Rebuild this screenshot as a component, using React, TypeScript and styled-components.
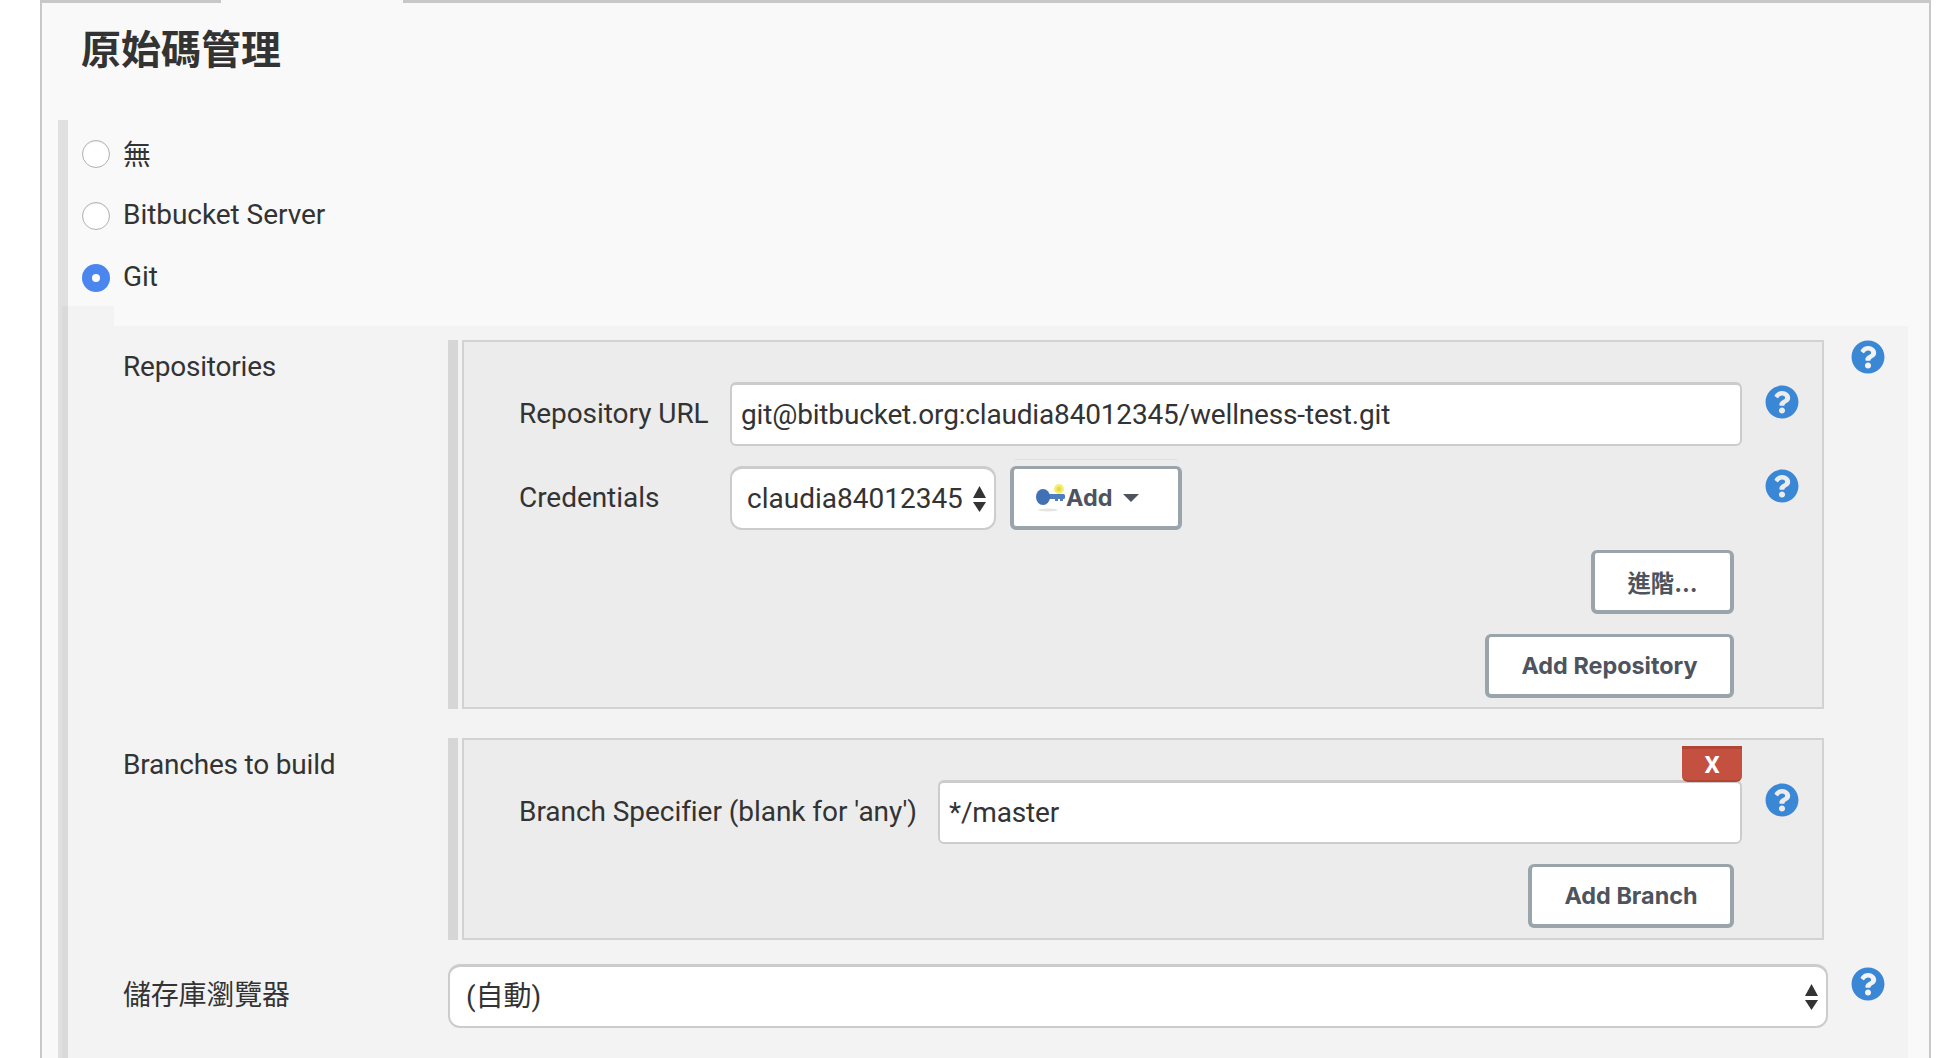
import React from "react";
import styled, { createGlobalStyle } from "styled-components";
import { FaQuestionCircle } from "react-icons/fa";

const FONT = `Roboto, "Noto Sans CJK TC", sans-serif`;
const BUTTON_FONT = `Inter, "Noto Sans CJK TC", sans-serif`;

const GlobalStyle = createGlobalStyle`
  html, body {
    margin: 0;
    height: 1058px;
    overflow: hidden;
    background: #ffffff;
    font-family: ${FONT};
    color: #333333;
  }
  * { box-sizing: border-box; }
`;

const Panel = styled.div`
  margin-left: 40px;
  width: 1891px;
  height: 1058px;
  overflow: hidden;
  background: #f9f9f9;
  border-left: 2px solid #c8c8c8;
  border-right: 2px solid #c8c8c8;
`;

const TabStrip = styled.div`
  display: flex;
  height: 3px;
`;

const TabEdge = styled.div<{ $width?: number; $open?: boolean }>`
  flex: ${({ $width }) => ($width ? `0 0 ${$width}px` : "1")};
  background: ${({ $open }) => ($open ? "transparent" : "#c8c8c8")};
`;

const Title = styled.h1`
  margin: 0;
  padding: 23px 0 0 39px;
  height: 117px;
  font-size: 40px;
  line-height: 50px;
  font-weight: 700;
  color: #333333;
`;

const ScmSection = styled.div`
  margin-left: 16px;
  border-left: 10px solid #e0e0e0;
  height: 938px;
`;

const RadioList = styled.div`
  display: flex;
  flex-direction: column;
  gap: 6px;
  padding: 6px 0 0 14px;
`;

const RadioRow = styled.label`
  display: flex;
  align-items: center;
  height: 56px;
  gap: 13px;
  font-size: 28px;
  letter-spacing: -0.05px;
`;

const RadioText = styled.span`
  margin-top: -3px;
`;

const Radio = styled.input`
  appearance: none;
  margin: 0;
  width: 28px;
  height: 28px;
  border-radius: 50%;
  background: #ffffff;
  border: 1.5px solid #b0b0b0;
  box-shadow: inset 0 1px 1px rgba(0, 0, 0, 0.06);

  &:checked {
    border: 10px solid #4a86ee;
    box-shadow: none;
  }
`;

const GitOptions = styled.div`
  position: relative;
  margin: 20px 21px 0 -6px;
  height: 800px;
  padding: 14px 0 0 61px;
  background: rgba(0, 0, 0, 0.025);

  &::before {
    content: "";
    position: absolute;
    left: 0;
    top: -20px;
    width: 52px;
    height: 20px;
    background: rgba(0, 0, 0, 0.025);
  }
`;

const FieldGrid = styled.div`
  display: grid;
  grid-template-columns: 325px 1380px 23px 34px;
  align-items: start;
`;

const SideLabel = styled.div<{ $top: number; $gap?: number }>`
  padding-top: ${({ $top }) => $top}px;
  margin-top: ${({ $gap }) => $gap ?? 0}px;
  font-size: 28px;
  line-height: 34px;
  letter-spacing: -0.2px;
`;

const Block = styled.div<{ $gap?: number }>`
  display: flex;
  gap: 4px;
  margin: ${({ $gap }) => $gap ?? 0}px 4px 0 0;
`;

const BlockBar = styled.div`
  flex: 0 0 10px;
  background: #d6d6d6;
`;

const BlockBox = styled.div<{ $bottom?: number }>`
  position: relative;
  flex: 1;
  display: flex;
  flex-direction: column;
  gap: 20px;
  padding: 40px 0 ${({ $bottom }) => $bottom ?? 9}px;
  background: #ececec;
  border: 2px solid #d2d2d2;
`;

const FormRow = styled.div`
  display: flex;
  align-items: flex-start;
  padding: 0 23px 0 55px;
`;

const FormLabel = styled.div<{ $width: number }>`
  flex: 0 0 ${({ $width }) => $width}px;
  height: 62px;
  display: flex;
  align-items: center;
  font-size: 28px;
  letter-spacing: -0.05px;
  white-space: nowrap;
`;

const TextField = styled.input`
  flex: 1;
  min-width: 0;
  height: 64px;
  padding: 0 9px;
  font: 28px ${FONT};
  letter-spacing: -0.17px;
  color: #333333;
  background: #ffffff;
  border: 2px solid #cccccc;
  border-top-width: 3px;
  border-radius: 6px;
  outline: none;
`;

const SelectWrap = styled.div<{ $width?: number; $top?: number }>`
  position: relative;
  flex: ${({ $width }) => ($width ? `0 0 ${$width}px` : "1")};
  height: 64px;
  margin-top: ${({ $top }) => $top ?? 0}px;
`;

const SelectField = styled.select<{ $inset?: number }>`
  appearance: none;
  width: 100%;
  height: 100%;
  padding: 0 30px 0 ${({ $inset }) => $inset ?? 15}px;
  font: 28px ${FONT};
  color: #333333;
  background: #ffffff;
  border: 2px solid #cccccc;
  border-top-width: 3px;
  border-radius: 12px;
  outline: none;
`;

const ArrowsIcon = styled.svg`
  position: absolute;
  right: 10px;
  top: 20px;
  width: 13px;
  height: 26px;
  pointer-events: none;
`;

const HelpSlot = styled.div<{ $top?: number; $push?: boolean }>`
  flex: 0 0 34px;
  margin: ${({ $top }) => $top ?? 0}px 0 0 ${({ $push }) => ($push ? "auto" : "23px")};
  color: #3a87d6;
  font-size: 34px;
  line-height: 0;
`;

const OuterHelp = styled.div<{ $top?: number }>`
  margin-top: ${({ $top }) => $top ?? 0}px;
  color: #3a87d6;
  font-size: 34px;
  line-height: 0;
`;

const OutlineButton = styled.button`
  display: inline-flex;
  align-items: center;
  justify-content: center;
  height: 64px;
  padding: 0;
  font: 700 23.4px ${BUTTON_FONT};
  color: #4d545d;
  background: #ffffff;
  border: 4px solid #9aa5ab;
  border-top-width: 3px;
  border-radius: 6px;
`;

const AddDropdown = styled(OutlineButton)`
  position: relative;
  flex: 0 0 172px;
  margin-left: 14px;
  justify-content: flex-start;
  padding-left: 21px;

  &::before {
    content: "";
    position: absolute;
    left: 1px;
    right: 1px;
    top: -10px;
    height: 1px;
    background: #d6e2ea;
  }
`;

const KeyIcon = styled.svg`
  flex: 0 0 31px;
  width: 31px;
  height: 30px;
`;

const Caret = styled.span`
  margin-left: 11px;
  border-left: 8px solid transparent;
  border-right: 8px solid transparent;
  border-top: 8px solid #4d545d;
`;

const ButtonRow = styled.div`
  display: flex;
  justify-content: flex-end;
  padding-right: 88px;
`;

const SizedButton = styled(OutlineButton)<{ $width: number }>`
  width: ${({ $width }) => $width}px;
`;

const DeleteButton = styled.button`
  position: absolute;
  z-index: 1;
  top: 6px;
  right: 80px;
  width: 60px;
  height: 36px;
  padding: 0;
  font: 700 24px ${FONT};
  color: #ffffff;
  background: #c4513f;
  border: none;
  border-top: 3px solid #b34433;
  border-bottom: 2px solid #b34433;
  border-radius: 0 0 6px 6px;
`;

const SelectArrows = () => (
  <ArrowsIcon viewBox="0 0 13 26">
    <path d="M6.5 0 L13 12 H0 Z" fill="#333333" />
    <path d="M0 16 H13 L6.5 26 Z" fill="#333333" />
  </ArrowsIcon>
);

const Help = () => <FaQuestionCircle />;

// old Jenkins key icon: soft blue key, yellow glint, faint shadow under it
const CredentialKey = () => (
  <KeyIcon viewBox="0 0 31 30">
    <ellipse cx="13" cy="27" rx="10" ry="1.5" fill="#e4e4e4" />
    <rect x="9" y="11" width="21" height="5" rx="1.5" fill="#4f7dbd" />
    <rect x="20" y="15" width="3" height="3" fill="#4f7dbd" />
    <rect x="25" y="15" width="3" height="3" fill="#4f7dbd" />
    <ellipse cx="8" cy="14" rx="7" ry="8" fill="#4270b4" />
    <circle cx="24" cy="6" r="5" fill="#f5ef72" />
    <circle cx="24" cy="6" r="2.5" fill="#e8d84e" />
  </KeyIcon>
);

export default function App() {
  return (
    <>
      <GlobalStyle />
      <Panel>
        <TabStrip>
          <TabEdge $width={179} />
          <TabEdge $width={182} $open />
          <TabEdge />
        </TabStrip>
        <Title>原始碼管理</Title>
        <ScmSection>
          <RadioList>
            <RadioRow>
              <Radio type="radio" name="scm" />
              <RadioText>無</RadioText>
            </RadioRow>
            <RadioRow>
              <Radio type="radio" name="scm" />
              <RadioText>Bitbucket Server</RadioText>
            </RadioRow>
            <RadioRow>
              <Radio type="radio" name="scm" defaultChecked />
              <RadioText>Git</RadioText>
            </RadioRow>
          </RadioList>
          <GitOptions>
            <FieldGrid>
              <SideLabel $top={10}>Repositories</SideLabel>
              <Block>
                <BlockBar />
                <BlockBox>
                  <FormRow>
                    <FormLabel $width={211}>Repository URL</FormLabel>
                    <TextField defaultValue="git@bitbucket.org:claudia84012345/wellness-test.git" />
                    <HelpSlot $top={3}>
                      <Help />
                    </HelpSlot>
                  </FormRow>
                  <FormRow>
                    <FormLabel $width={211}>Credentials</FormLabel>
                    <SelectWrap $width={266}>
                      <SelectField defaultValue="claudia84012345">
                        <option>claudia84012345</option>
                      </SelectField>
                      <SelectArrows />
                    </SelectWrap>
                    <AddDropdown type="button">
                      <CredentialKey />
                      Add
                      <Caret />
                    </AddDropdown>
                    <HelpSlot $top={3} $push>
                      <Help />
                    </HelpSlot>
                  </FormRow>
                  <ButtonRow>
                    <SizedButton type="button" $width={143}>
                      進階...
                    </SizedButton>
                  </ButtonRow>
                  <ButtonRow>
                    <SizedButton type="button" $width={249}>
                      Add Repository
                    </SizedButton>
                  </ButtonRow>
                </BlockBox>
              </Block>
              <div />
              <OuterHelp>
                <Help />
              </OuterHelp>

              <SideLabel $top={10} $gap={29}>
                Branches to build
              </SideLabel>
              <Block $gap={29}>
                <BlockBar />
                <BlockBox $bottom={10}>
                  <DeleteButton type="button">X</DeleteButton>
                  <FormRow>
                    <FormLabel $width={419}>
                      Branch Specifier (blank for 'any')
                    </FormLabel>
                    <TextField defaultValue="*/master" />
                    <HelpSlot $top={3}>
                      <Help />
                    </HelpSlot>
                  </FormRow>
                  <ButtonRow>
                    <SizedButton type="button" $width={206}>
                      Add Branch
                    </SizedButton>
                  </ButtonRow>
                </BlockBox>
              </Block>
              <div />
              <div />

              <SideLabel $top={15} $gap={24}>
                儲存庫瀏覽器
              </SideLabel>
              <SelectWrap $top={24}>
                <SelectField $inset={16} defaultValue="(自動)">
                  <option>(自動)</option>
                </SelectField>
                <SelectArrows />
              </SelectWrap>
              <div />
              <OuterHelp $top={27}>
                <Help />
              </OuterHelp>
            </FieldGrid>
          </GitOptions>
        </ScmSection>
      </Panel>
    </>
  );
}
